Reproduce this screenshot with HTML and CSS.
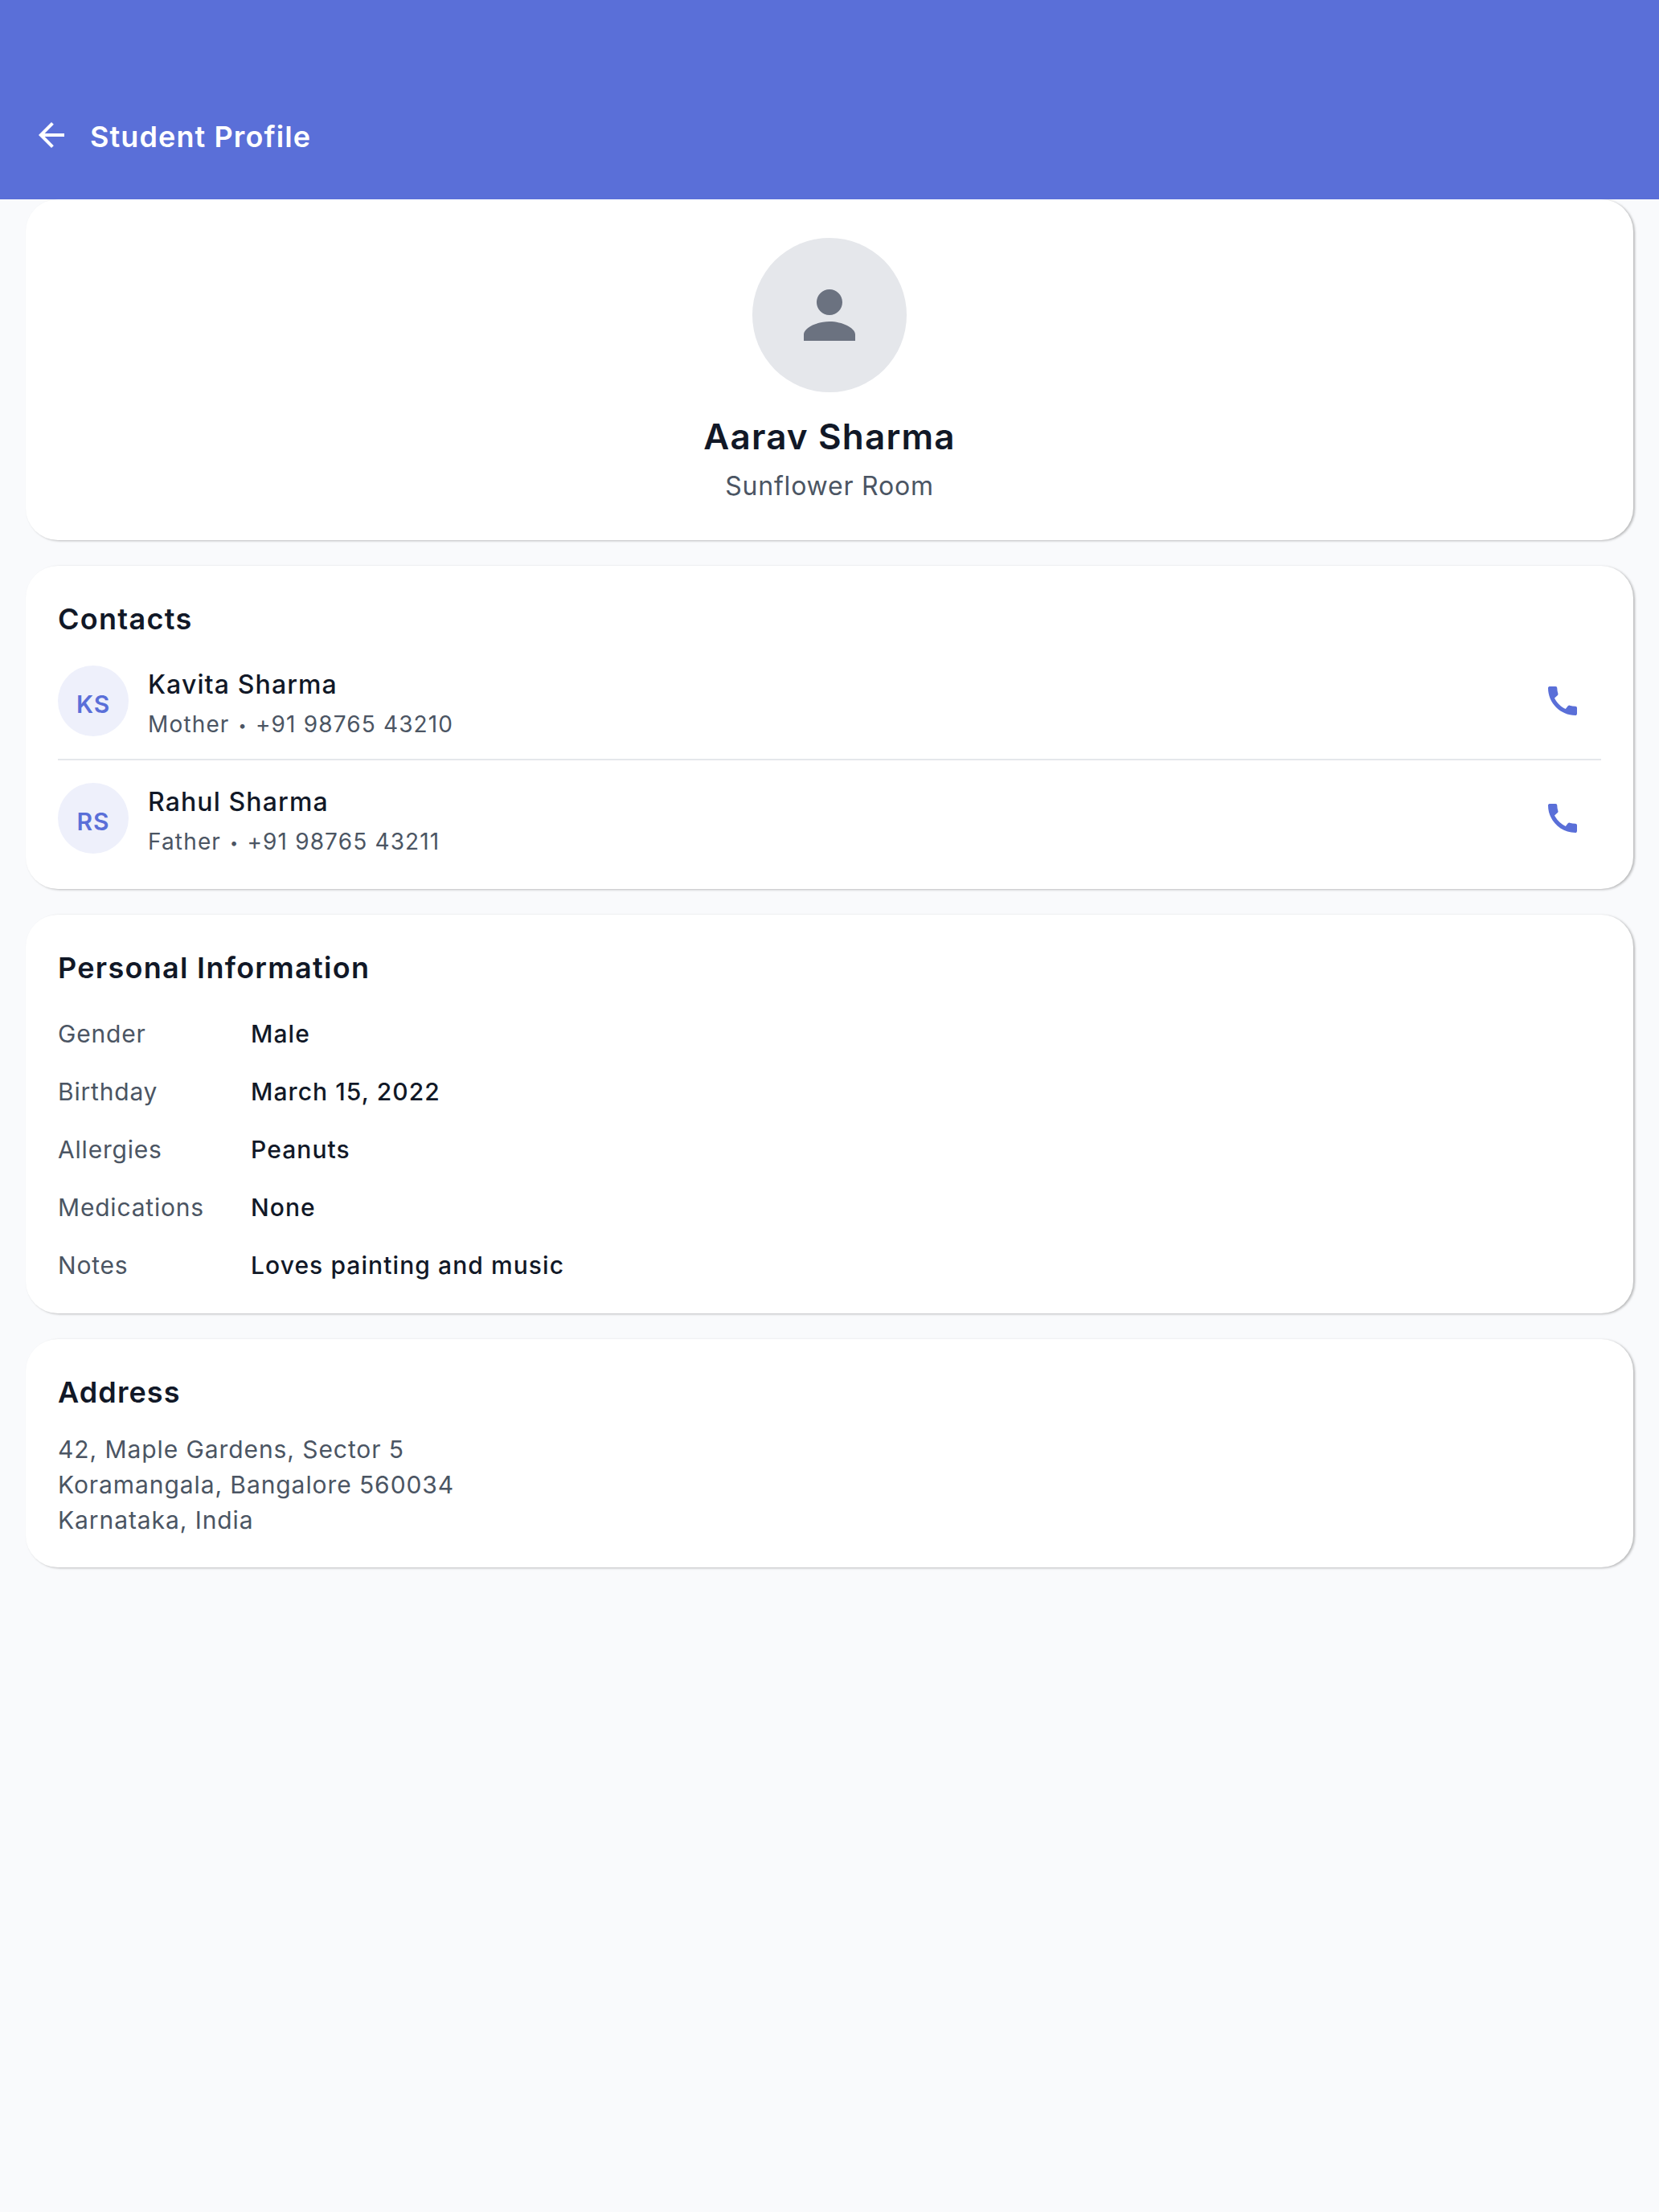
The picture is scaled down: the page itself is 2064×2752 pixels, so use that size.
FILE: index.html
```html
<!DOCTYPE html>
<html lang="en">
<head>
<meta charset="utf-8">
<title>Student Profile</title>
<link rel="stylesheet" href="styles.css">
</head>
<body>
<header class="app-bar">
  <svg class="icon" viewBox="0 0 24 24"><path d="M20 11H7.83l5.59-5.59L12 4l-8 8 8 8 1.41-1.41L7.83 13H20v-2z"/></svg>
  <h1 class="app-title">Student Profile</h1>
</header>
<main class="content">
  <section class="card hero">
    <div class="photo"><svg viewBox="0 0 24 24"><path d="M12 12c2.21 0 4-1.79 4-4s-1.79-4-4-4-4 1.79-4 4 1.79 4 4 4zm0 2c-4 0-8 2-8 4v2h16v-2c0-2-4-4-8-4z"/></svg></div>
    <h2 class="student-name">Aarav Sharma</h2>
    <p class="room">Sunflower Room</p>
  </section>

  <section class="card contacts">
    <h3 class="card-title">Contacts</h3>
    <div class="contact">
      <div class="initials">KS</div>
      <div class="contact-text">
        <p class="contact-name">Kavita Sharma</p>
        <p class="contact-meta">Mother <span class="dot">•</span> +91 98765 43210</p>
      </div>
      <svg class="icon call" viewBox="0 0 24 24"><path d="M20.01 15.38c-1.23 0-2.42-.2-3.53-.56-.35-.12-.74-.03-1.01.24l-1.57 1.97c-2.83-1.35-5.48-3.9-6.89-6.83l1.95-1.66c.27-.28.35-.67.24-1.02-.37-1.11-.56-2.3-.56-3.53 0-.54-.45-.99-.99-.99H4.19C3.65 3 3 3.24 3 3.99 3 13.28 10.73 21 20.01 21c.71 0 .99-.63.99-1.18v-3.45c0-.54-.45-.99-.99-.99z"/></svg>
    </div>
    <div class="contact">
      <div class="initials">RS</div>
      <div class="contact-text">
        <p class="contact-name">Rahul Sharma</p>
        <p class="contact-meta">Father <span class="dot">•</span> +91 98765 43211</p>
      </div>
      <svg class="icon call" viewBox="0 0 24 24"><path d="M20.01 15.38c-1.23 0-2.42-.2-3.53-.56-.35-.12-.74-.03-1.01.24l-1.57 1.97c-2.83-1.35-5.48-3.9-6.89-6.83l1.95-1.66c.27-.28.35-.67.24-1.02-.37-1.11-.56-2.3-.56-3.53 0-.54-.45-.99-.99-.99H4.19C3.65 3 3 3.24 3 3.99 3 13.28 10.73 21 20.01 21c.71 0 .99-.63.99-1.18v-3.45c0-.54-.45-.99-.99-.99z"/></svg>
    </div>
  </section>

  <section class="card personal">
    <h3 class="card-title">Personal Information</h3>
    <dl class="facts">
      <div class="fact"><dt>Gender</dt><dd>Male</dd></div>
      <div class="fact"><dt>Birthday</dt><dd>March 15, 2022</dd></div>
      <div class="fact"><dt>Allergies</dt><dd>Peanuts</dd></div>
      <div class="fact"><dt>Medications</dt><dd>None</dd></div>
      <div class="fact"><dt>Notes</dt><dd>Loves painting and music</dd></div>
    </dl>
  </section>

  <section class="card address">
    <h3 class="card-title">Address</h3>
    <p class="lines">42, Maple Gardens, Sector 5<br>Koramangala, Bangalore 560034<br>Karnataka, India</p>
  </section>
</main>
</body>
</html>
```
FILE: styles.css
```css
* {
  box-sizing: border-box;
  margin: 0;
  padding: 0;
}

body {
  min-height: 2752px;
  background: #f9fafc;
  color: #111827;
  font-family: Inter, "Liberation Sans", sans-serif;
  font-size: 30px;
  letter-spacing: 0.92px;
}

.icon {
  width: 48px;
  height: 48px;
  flex: none;
  fill: currentColor;
}

.app-bar {
  display: flex;
  align-items: center;
  gap: 24px;
  height: 248px;
  padding: 88px 40px 0;
  background: #5a6fd8;
  color: #fff;
}

.app-title {
  padding-top: 3px;
  font-size: 36px;
  font-weight: 600;
  line-height: 44px;
  letter-spacing: 1.1px;
}

.content {
  display: flex;
  flex-direction: column;
  gap: 32px;
  padding: 0 32px;
}

.card {
  padding: 40px;
  border-radius: 40px;
  background: #fff;
  box-shadow: 2px 1px 3px rgba(0, 0, 0, 0.26);
}

.card-title {
  font-size: 36px;
  font-weight: 600;
  line-height: 52px;
  letter-spacing: 1.3px;
}

.hero {
  display: flex;
  flex-direction: column;
  align-items: center;
  padding: 48px 40px 46px;
  clip-path: inset(0 -8px -8px -8px);
}

.photo {
  display: flex;
  align-items: center;
  justify-content: center;
  width: 192px;
  height: 192px;
  border-radius: 50%;
  background: #e5e7eb;
}

.photo svg {
  width: 96px;
  height: 96px;
  fill: #6b7280;
}

.student-name {
  margin-top: 24px;
  font-size: 44px;
  font-weight: 600;
  line-height: 62px;
  letter-spacing: 1.17px;
}

.room {
  margin-top: 10px;
  color: #4b5563;
  font-size: 32px;
  line-height: 42px;
  letter-spacing: 0.8px;
}

.contacts .card-title {
  margin-bottom: 4px;
}

.contact {
  display: flex;
  align-items: center;
  gap: 24px;
  padding: 24px 24px 24px 0;
}

.contact + .contact {
  padding-bottom: 0;
  border-top: 2px solid #e5e7eb;
}

.initials {
  width: 88px;
  height: 88px;
  padding-top: 8px;
  border-radius: 50%;
  background: #eef0fb;
  color: #5a6fd8;
  font-weight: 600;
  line-height: 80px;
  text-align: center;
}

.contact-text {
  flex: 1;
  height: 96px;
  padding-top: 4px;
}

.contact-name {
  font-size: 32px;
  font-weight: 500;
  line-height: 48px;
  letter-spacing: 1.12px;
}

.contact-meta {
  margin-top: 5px;
  color: #4b5563;
  font-size: 28px;
  line-height: 40px;
  letter-spacing: 1.15px;
}

.dot {
  margin: 0 1px 0 2px;
  font-size: 18px;
  line-height: 1;
  vertical-align: 2px;
}

.call {
  color: #5a6fd8;
}

.personal {
  padding-bottom: 24px;
}

.facts {
  margin-top: 20px;
}

.fact {
  display: grid;
  grid-template-columns: 240px 1fr;
  line-height: 72px;
}

.fact dt {
  color: #4b5563;
  letter-spacing: 0.8px;
}

.fact dd {
  font-weight: 500;
  letter-spacing: 1.08px;
}

.address {
  padding-bottom: 37px;
}

.address .card-title {
  letter-spacing: 1.1px;
}

.lines {
  margin-top: 23px;
  color: #4b5563;
  line-height: 44px;
}
```
